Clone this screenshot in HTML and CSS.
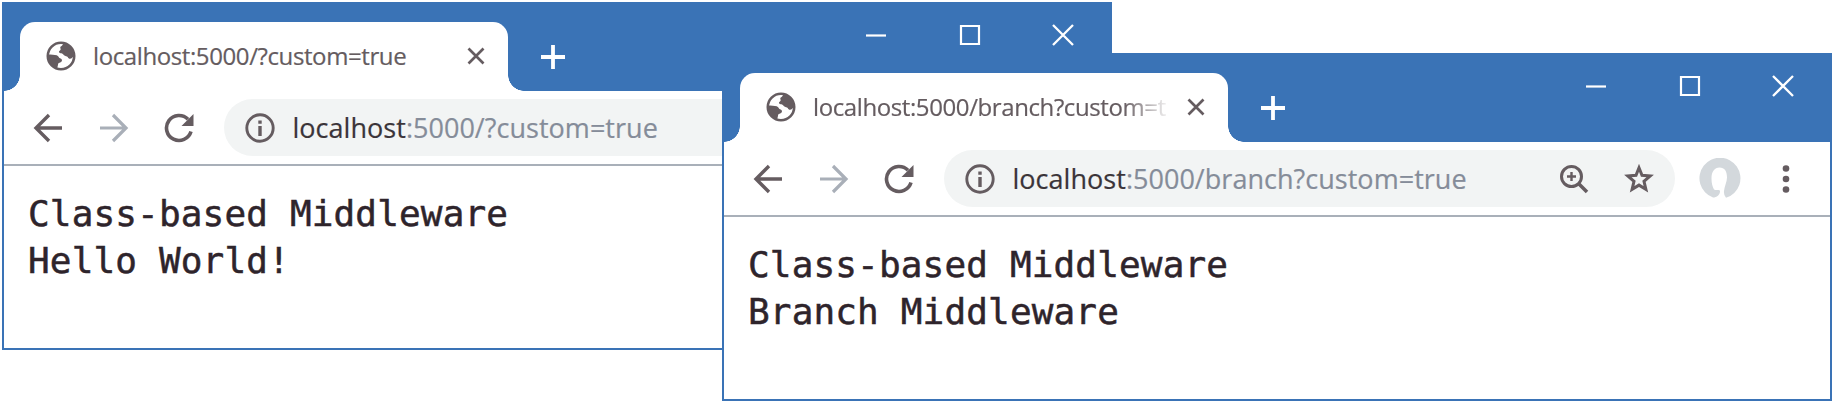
FILE: index.html
```html
<!DOCTYPE html>
<html lang="en">
<head>
<meta charset="utf-8">
<title>Class-based Middleware</title>
<link rel="stylesheet" href="styles.css">
</head>
<body>
<svg class="defs" width="0" height="0" aria-hidden="true">
  <symbol id="globe" viewBox="0 0 30 30"><circle cx="15" cy="15" r="13.2" fill="#fff" stroke="currentColor" stroke-width="2.6"/><path fill="currentColor" d="M18 1.5c-1.500 1.500-1 3.200-3.500 4.200-.8 1.800 1.200 2.300-.6 3.900-1.700 1-.8 2.700.8 2.600 1.700-.4 2.200.9 3.300 2 1.100 1.200 3 .6 3.900 2 .6 1.900 2.900 1.800 4.300.6l2.200-2.600C27.900 8 24 3.200 18 1.500zM1.700 13.500c3.500.2 7 .2 9 .7 2 .7 1.900 2.500 3.300 3.100 1.700.7 2.600 1.700 1.600 3.200-1 1.400-3.100.8-3.500 2.500-.2 1.600-.5 3.500-1.500 4.500C5.500 25.700 1.500 20.500 1.700 13.500z"/></symbol>
  <symbol id="cross" viewBox="0 0 18 18"><path d="M1.500 1.500l15 15M16.500 1.500l-15 15" stroke="currentColor" stroke-width="2.700"/></symbol>
  <symbol id="plus" viewBox="0 0 26 26"><path d="M13 1v24M1 13h24" stroke="currentColor" stroke-width="3.800"/></symbol>
  <symbol id="min" viewBox="0 0 22 22"><path d="M1 11.500h20" stroke="currentColor" stroke-width="2.200"/></symbol>
  <symbol id="max" viewBox="0 0 22 22"><path d="M2 2h18v18H2z" fill="none" stroke="currentColor" stroke-width="2.200"/></symbol>
  <symbol id="quit" viewBox="0 0 22 22"><path d="M1 1l20 20M21 1L1 21" stroke="currentColor" stroke-width="2.300"/></symbol>
  <symbol id="back" viewBox="0 0 30 30"><path d="M29 15H3M16 2L3 15l13 13" fill="none" stroke="currentColor" stroke-width="3.400"/></symbol>
  <symbol id="fwd" viewBox="0 0 30 30"><path d="M1 15h26M14 2l13 13-13 13" fill="none" stroke="currentColor" stroke-width="3.200"/></symbol>
  <symbol id="reload" viewBox="0 0 30 30"><path d="M27 18.500A12.500 12.500 0 1 1 24 6.300" fill="none" stroke="currentColor" stroke-width="3.600"/><path d="M29.500 1v12h-12z" fill="currentColor"/></symbol>
  <symbol id="info" viewBox="0 0 30 30"><circle cx="15" cy="15" r="13.200" fill="none" stroke="currentColor" stroke-width="2.900"/><path d="M15 7.500v3.200M15 13v10" stroke="currentColor" stroke-width="3.400"/></symbol>
  <symbol id="zoom" viewBox="0 0 30 30"><circle cx="12.500" cy="12.500" r="10" fill="none" stroke="currentColor" stroke-width="3"/><path d="M19.500 19.500l8.500 8.500" stroke="currentColor" stroke-width="3.600"/><path d="M12.500 8v9M8 12.500h9" stroke="currentColor" stroke-width="2.400"/></symbol>
  <symbol id="star" viewBox="0 0 30 30"><path d="M15 3.800l3 7.500 8.200.7-6.200 5.300 1.900 8-6.900-4.200-6.900 4.200 1.900-8-6.200-5.300 8.200-.7z" fill="none" stroke="currentColor" stroke-width="3"/></symbol>
  <symbol id="avatar" viewBox="0 0 42 42"><path fill="#d3d8dc" d="M14 39.500A20.500 20.500 0 1 1 27 39.800Q24.500 37 25 33C25.500 28 28 24 28 19.500 28 13 25.500 9.500 20.500 9.500S12.500 13.500 12.500 20.500c0 5 1 8 2.500 11 2.500 1.500 5.500-.5 6 1.500.3 3-3 6.500-7 6.500z"/></symbol>
  <symbol id="dots" viewBox="0 0 8 30"><circle cx="4" cy="4.500" r="3.300" fill="currentColor"/><circle cx="4" cy="15" r="3.300" fill="currentColor"/><circle cx="4" cy="25.500" r="3.300" fill="currentColor"/></symbol>
</svg>

<section class="window window-root">
  <header class="titlebar">
    <div class="tab">
      <svg class="icon"><use href="#globe"/></svg>
      <span class="tab-title">localhost:5000/?custom=true</span>
      <svg class="tab-close"><use href="#cross"/></svg>
    </div>
    <svg class="new-tab"><use href="#plus"/></svg>
    <div class="controls">
      <span class="control"><svg><use href="#min"/></svg></span>
      <span class="control"><svg><use href="#max"/></svg></span>
      <span class="control"><svg><use href="#quit"/></svg></span>
    </div>
  </header>
  <nav class="toolbar">
    <svg class="icon"><use href="#back"/></svg>
    <svg class="icon icon-off"><use href="#fwd"/></svg>
    <svg class="icon"><use href="#reload"/></svg>
    <div class="omnibox">
      <svg class="icon"><use href="#info"/></svg>
      <span class="url"><span class="host">localhost</span>:5000/?custom=true</span>
      <svg class="icon"><use href="#zoom"/></svg>
      <svg class="icon"><use href="#star"/></svg>
    </div>
    <svg class="avatar"><use href="#avatar"/></svg>
    <svg class="menu"><use href="#dots"/></svg>
  </nav>
  <pre class="page">Class-based Middleware
Hello World!</pre>
</section>

<section class="window window-branch">
  <header class="titlebar">
    <div class="tab">
      <svg class="icon"><use href="#globe"/></svg>
      <span class="tab-title tab-title-faded">localhost:5000/branch?custom=t</span>
      <svg class="tab-close"><use href="#cross"/></svg>
    </div>
    <svg class="new-tab"><use href="#plus"/></svg>
    <div class="controls">
      <span class="control"><svg><use href="#min"/></svg></span>
      <span class="control"><svg><use href="#max"/></svg></span>
      <span class="control"><svg><use href="#quit"/></svg></span>
    </div>
  </header>
  <nav class="toolbar">
    <svg class="icon"><use href="#back"/></svg>
    <svg class="icon icon-off"><use href="#fwd"/></svg>
    <svg class="icon"><use href="#reload"/></svg>
    <div class="omnibox">
      <svg class="icon"><use href="#info"/></svg>
      <span class="url"><span class="host">localhost</span>:5000/branch?custom=true</span>
      <svg class="icon"><use href="#zoom"/></svg>
      <svg class="icon"><use href="#star"/></svg>
    </div>
    <svg class="avatar"><use href="#avatar"/></svg>
    <svg class="menu"><use href="#dots"/></svg>
  </nav>
  <pre class="page">Class-based Middleware
Branch Middleware</pre>
</section>
</body>
</html>
```
FILE: styles.css
```css
* { box-sizing: border-box; }

body {
  margin: 0;
  position: relative;
  width: 1834px;
  height: 402px;
  overflow: hidden;
  background: #fff;
  font-family: "Open Sans", "Noto Sans", sans-serif;
  color: #655c60;
}

svg { display: block; flex: none; }
.defs { position: absolute; }

.window {
  position: absolute;
  width: 1110px;
  height: 348px;
  border: 2px solid #3a73b6;
  background: #fff;
}
.window-root { left: 2px; top: 2px; }
.window-branch { left: 722px; top: 53px; }

.titlebar {
  display: flex;
  height: 87px;
  padding-left: 16px;
  background: #3a73b6;
}

.tab {
  position: relative;
  display: flex;
  align-items: center;
  width: 488px;
  height: 69px;
  margin-top: 18px;
  padding: 0 23px 1px 26px;
  border-radius: 15px 15px 0 0;
  background: #fff;
}
.tab::before,
.tab::after {
  content: "";
  position: absolute;
  bottom: 0;
  width: 16px;
  height: 16px;
}
.tab::before {
  left: -16px;
  background: radial-gradient(circle at 0 0, transparent 15.5px, #fff 16px);
}
.tab::after {
  right: -16px;
  background: radial-gradient(circle at 100% 0, transparent 15.5px, #fff 16px);
}

.icon { width: 30px; height: 30px; }
.icon-off { color: #a9afb8; }

.tab-title {
  width: 358px;
  margin-left: 17px;
  white-space: nowrap;
  font-size: 24px;
  line-height: 34px;
  letter-spacing: -0.4px;
  -webkit-text-stroke: 0.2px;
}
.tab-title-faded {
  -webkit-mask-image: linear-gradient(to right, #000 310px, transparent 358px);
  mask-image: linear-gradient(to right, #000 310px, transparent 358px);
}
.tab-close { width: 18px; height: 18px; margin-left: auto; }

.new-tab {
  width: 26px;
  height: 26px;
  margin: 40px 0 0 32px;
  color: #fff;
}

.controls { display: flex; height: 61px; margin-left: auto; color: #fff; }
.control { display: flex; align-items: center; justify-content: center; width: 93.5px; }
.control svg { width: 22px; height: 22px; }

.toolbar {
  display: flex;
  align-items: center;
  height: 75px;
  padding-left: 29px;
  border-bottom: 2px solid #a9b0b9;
}
.toolbar > .icon { margin-right: 35.500px; }

.omnibox {
  display: flex;
  align-items: center;
  width: 731px;
  height: 57px;
  margin-left: -6px;
  padding: 0 21px;
  border-radius: 29px;
  background: #f2f4f4;
}
.omnibox .icon:last-child { margin-left: 35px; }

.url {
  flex: 1;
  margin-left: 18px;
  white-space: nowrap;
  font-size: 27px;
  line-height: 38px;
  letter-spacing: 0.03px;
  color: #858c99;
  -webkit-text-stroke: 0.2px;
}
.host { color: #3b3439; }

.avatar { width: 42px; height: 42px; margin-left: 24px; }
.menu { width: 8px; height: 30px; margin-left: 41px; }

.page {
  margin: 0;
  padding: 24px 0 0 24px;
  font-family: "DejaVu Sans Mono", monospace;
  font-size: 36px;
  line-height: 47px;
  letter-spacing: 0.15px;
  color: #2e242b;
  -webkit-text-stroke: 0.5px;
}
```
